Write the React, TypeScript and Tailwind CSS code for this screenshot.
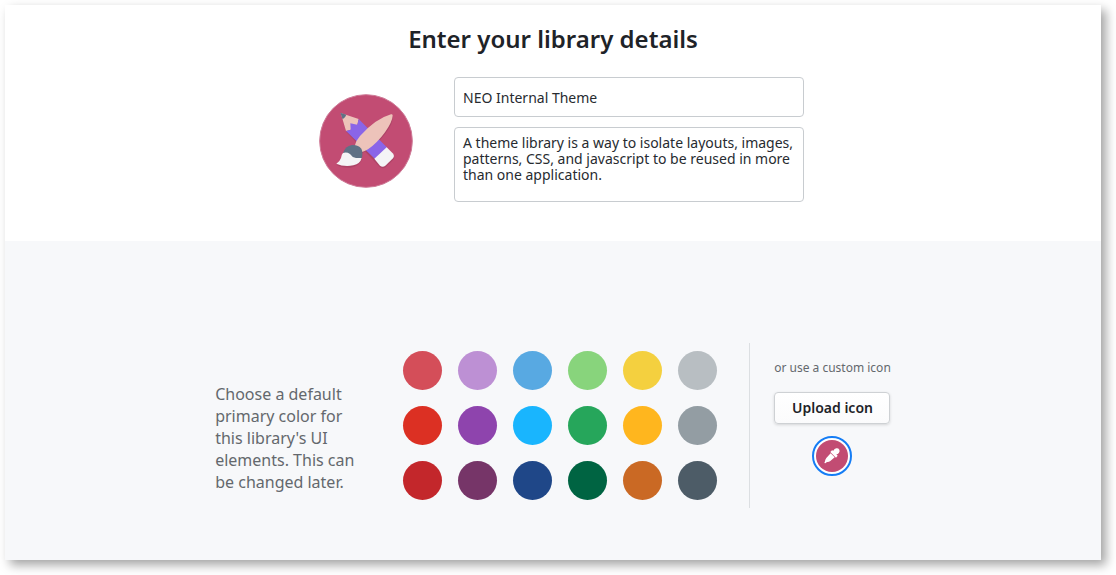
import { useState } from "react";

const swatches = [
  { name: "Soft red", className: "bg-[#d44e59]" },
  { name: "Soft purple", className: "bg-[#bd90d4]" },
  { name: "Soft blue", className: "bg-[#58a9e2]" },
  { name: "Soft green", className: "bg-[#88d47c]" },
  { name: "Soft yellow", className: "bg-[#f4d03f]" },
  { name: "Light gray", className: "bg-[#b8bec2]" },
  { name: "Red", className: "bg-[#dc3023]" },
  { name: "Purple", className: "bg-[#8e44ad]" },
  { name: "Blue", className: "bg-[#19b5fe]" },
  { name: "Green", className: "bg-[#26a65b]" },
  { name: "Amber", className: "bg-[#ffb61e]" },
  { name: "Gray", className: "bg-[#939da3]" },
  { name: "Dark red", className: "bg-[#c3272b]" },
  { name: "Plum", className: "bg-[#763568]" },
  { name: "Navy", className: "bg-[#1f4788]" },
  { name: "Dark green", className: "bg-[#006442]" },
  { name: "Copper", className: "bg-[#ca6924]" },
  { name: "Slate", className: "bg-[#4d5c67]" },
];

function LibraryIcon() {
  return (
    <svg className="size-[94px] shrink-0" viewBox="27 27 282 282" role="img" aria-label="Library icon">
      <circle cx="168" cy="168" r="139" fill="#c24c73" stroke="#cf7d99" strokeWidth="3" />
      <g opacity="0.1" transform="translate(1 4)">
        <path d="M92 84 146 102 249 206Q254 213 249 220L226 243Q218 249 209 243L108 137Z" />
        <path d="M247 88Q250 108 226 141Q198 180 155 201Q160 238 120 244Q94 245 79 236Q93 226 95 212Q106 178 136 180Z" />
      </g>
      <path d="M92 84 146 102 142 121 126 122 122 135 108 138Z" fill="#edc3ba" />
      <path d="M91 83 109 89Q106 98 98 103Z" fill="#5f7185" />
      <path d="M146 102 232 188 195 222 108 138 122 134 121 115 142 119Z" fill="#8a65e8" />
      <path d="M230 187 248 205Q255 212 249 220L226 242Q218 248 210 242L193 221Z" fill="#f4f4f6" />
      <path d="M243 88Q248 87 248 92Q247 110 225 142Q201 175 174 193Q164 199 154 202L134 183Q138 166 150 153Q197 101 243 88Z" fill="#edc3ba" />
      <path d="M99 205Q105 183 126 180Q145 179 154 191Q160 203 155 220L126 222Z" fill="#5f7185" />
      <path d="M99 204Q110 200 120 207Q126 217 138 219L155 219Q151 236 130 241Q101 246 79 236Q90 229 93 219Q95 207 99 204Z" fill="#f4f4f6" />
    </svg>
  );
}

function EyedropperIcon() {
  return (
    <svg className="size-4" viewBox="51 47 48 48" aria-hidden="true">
      <path
        fill="#fff"
        d="M79 55Q82 49 88 48Q94 47 97 52Q99 57 96 61Q93 66 88 66L92 70 87 76 70 59 75 54ZM71 63 83 75 70 86Q65 90 60 89L55 93 52 92 54 87Q54 82 58 77Z"
      />
    </svg>
  );
}

export default function App() {
  const [name, setName] = useState("NEO Internal Theme");
  const [description, setDescription] = useState(
    "A theme library is a way to isolate layouts, images, patterns, CSS, and javascript to be reused in more than one application."
  );
  const [color, setColor] = useState("custom");

  return (
    <div className="flex min-h-screen bg-white pt-[5px] pr-[15px] pb-[15px] pl-[5px] font-['Noto_Sans',sans-serif]">
      <main className="flex flex-1 flex-col bg-white shadow-[5px_5px_10px_rgba(0,0,0,0.36)]">
        <section className="flex flex-col items-center px-4 pt-4 pb-[39px]">
          <h1 className="text-2xl leading-9 font-semibold text-[#1e2328]">Enter your library details</h1>
          <div className="mt-5 flex w-full max-w-[502px] items-center justify-between pl-[17px]">
            <div className="pt-0.5">
              <LibraryIcon />
            </div>
            <div className="flex w-[350px] flex-col gap-2.5">
              <input
                type="text"
                aria-label="Library name"
                value={name}
                onChange={(e) => setName(e.target.value)}
                className="h-10 w-full rounded border border-[#c8ccd0] bg-white px-2 text-sm text-[#272b30] outline-none focus:border-[#157df5]"
              />
              <textarea
                aria-label="Library description"
                value={description}
                onChange={(e) => setDescription(e.target.value)}
                className="block h-[75px] w-full resize-none rounded border border-[#c8ccd0] bg-white px-2 py-[7px] text-sm leading-4 text-[#272b30] outline-none focus:border-[#157df5]"
              />
            </div>
          </div>
        </section>

        <section className="flex flex-1 justify-center bg-[#f7f8fa] px-4 pt-[102px] pb-[52px]">
          <div className="flex items-center self-start">
            <p id="color-label" className="mr-9 w-[152px] pt-6 text-base leading-[22px] text-[#64686d]">
              Choose a default primary color for this library's UI elements. This can be changed later.
            </p>
            <div role="radiogroup" aria-labelledby="color-label" className="grid grid-cols-6 gap-4">
              {swatches.map((swatch) => (
                <input
                  key={swatch.name}
                  type="radio"
                  name="primary-color"
                  aria-label={swatch.name}
                  checked={color === swatch.name}
                  onChange={() => setColor(swatch.name)}
                  className={`size-[39px] cursor-pointer appearance-none rounded-full checked:ring-2 checked:ring-[#157df5] checked:ring-offset-2 ${swatch.className}`}
                />
              ))}
            </div>
            <div className="ml-8 flex h-[165px] flex-col items-center border-l border-[#dcdfe2] pt-[17px] pl-6">
              <span className="text-xs leading-4 text-[#64686d]">or use a custom icon</span>
              <button
                type="button"
                className="mt-4 h-8 w-[116px] rounded border border-[#ced1d4] bg-linear-to-b from-white to-[#fbfbfc] text-sm font-semibold text-[#1e2328] shadow-[0_1px_3px_rgba(0,0,0,0.14)]"
              >
                Upload icon
              </button>
              <button
                type="button"
                aria-label="Pick a custom color"
                aria-pressed={color === "custom"}
                onClick={() => setColor("custom")}
                className="mt-3 flex size-10 items-center justify-center rounded-full border-2 border-transparent bg-white p-0.5 aria-pressed:border-[#157df5]"
              >
                <span className="flex size-8 items-center justify-center rounded-full bg-[#c24c73]">
                  <EyedropperIcon />
                </span>
              </button>
            </div>
          </div>
        </section>
      </main>
    </div>
  );
}
